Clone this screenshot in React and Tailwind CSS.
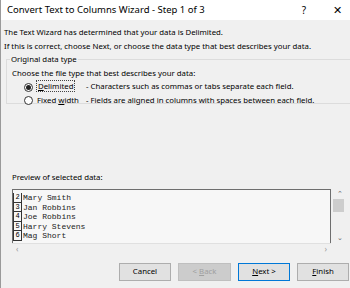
export default function App() {
  const rows = [
    ["2", "Mary Smith"],
    ["3", "Jan Robbins"],
    ["4", "Joe Robbins"],
    ["5", "Harry Stevens"],
    ["6", "Mag Short"],
  ];

  return (
    <div className="w-[350px] h-[288px] overflow-hidden bg-[#f0f0f0] border-l border-[#9a9a9a] font-['Noto_Sans',sans-serif] text-[7.8px] text-black">
      {/* Title bar */}
      <div className="h-[20px] bg-white flex items-center pl-[6px] text-[9.5px]">
        <span className="flex-1">Convert Text to Columns Wizard - Step 1 of 3</span>
        <span className="w-[14px] text-center mr-[19px] text-[10px]">?</span>
        <span className="w-[14px] text-center mr-[6px] text-[11px] font-light">✕</span>
      </div>

      <div className="pl-[3px]">
        <div className="h-[14px] mt-[5px] leading-[14px]">The Text Wizard has determined that your data is Delimited.</div>
        <div className="h-[14px] leading-[14px]">If this is correct, choose Next, or choose the data type that best describes your data.</div>

        {/* Group box */}
        <fieldset className="mt-[1px] ml-[2px] w-[380px] h-[50px] border border-[#dcdcdc] pl-[5px] pt-0">
          <legend className="px-[1px] ml-[-2px] leading-[10px]">Original data type</legend>
          <div className="h-[13px] leading-[13px] mt-[3px]">Choose the file type that best describes your data:</div>
          <div className="flex items-center h-[12px] mt-[1px]">
            <span className="ml-[12px] w-[9px] h-[9px] rounded-full border border-[#333] bg-white flex items-center justify-center">
              <span className="w-[5px] h-[5px] rounded-full bg-[#222]" />
            </span>
            <span className="ml-[4px] w-[49px]">
              <span className="outline outline-1 outline-dotted outline-[#444] px-[1px]">
                <span className="underline">D</span>elimited
              </span>
            </span>
            <span>- Characters such as commas or tabs separate each field.</span>
          </div>
          <div className="flex items-center h-[13px] mt-[1px]">
            <span className="ml-[12px] w-[9px] h-[9px] rounded-full border border-[#333] bg-white" />
            <span className="ml-[4px] w-[49px]">
              Fixed <span className="underline">w</span>idth
            </span>
            <span>- Fields are aligned in columns with spaces between each field.</span>
          </div>
        </fieldset>

        <div className="h-[12px] leading-[12px] mt-[67px] ml-[8px]">Preview of selected data:</div>

        {/* Preview */}
        <div className="ml-[8px] mt-[6px] flex">
          <div className="w-[319px] h-[54px] border-t border-r border-l border-[#6e6e6e] bg-[#f7f7f7] pt-[3px] font-['Liberation_Mono',monospace] text-[8px]">
            {rows.map(([n, name]) => (
              <div key={n} className="flex h-[9.6px] leading-[9.6px]">
                <span className="w-[9px] border border-t-0 border-[#333] text-center text-[7px]">{n}</span>
                <span className="pl-[1px] text-[#222]">{name}</span>
              </div>
            ))}
          </div>
          <div className="w-[17px] h-[54px] flex flex-col items-center text-[7px] text-[#666]">
            <span className="h-[10px] leading-[10px]">⌃</span>
            <span className="w-[11px] h-[13px] bg-[#cdcdcd] mr-[3px]" />
            <span className="flex-1" />
            <span className="h-[10px] leading-[10px]">⌄</span>
          </div>
        </div>
        <div className="ml-[8px] w-[319px] h-[11px] border-t border-[#e0e0e0] flex items-center justify-between px-[4px] text-[8px] text-[#9a9a9a]">
          <span>‹</span>
          <span>›</span>
        </div>

        {/* Buttons */}
        <div className="flex justify-end gap-[7px] mt-[9px] mr-[1px]">
          <button className="w-[52px] h-[18px] bg-[#e1e1e1] border border-[#adadad] text-[7.8px]">Cancel</button>
          <button className="w-[53px] h-[18px] bg-[#cccccc] border border-[#bfbfbf] text-[7.8px] text-[#a0a0a0]">&lt; <span className="underline">B</span>ack</button>
          <button className="w-[52px] h-[18px] bg-[#e1e1e1] border border-[#0078d7] text-[7.8px]"><span className="underline">N</span>ext &gt;</button>
          <button className="w-[52px] h-[18px] bg-[#e1e1e1] border border-[#adadad] text-[7.8px]"><span className="underline">F</span>inish</button>
        </div>
      </div>
    </div>
  );
}
